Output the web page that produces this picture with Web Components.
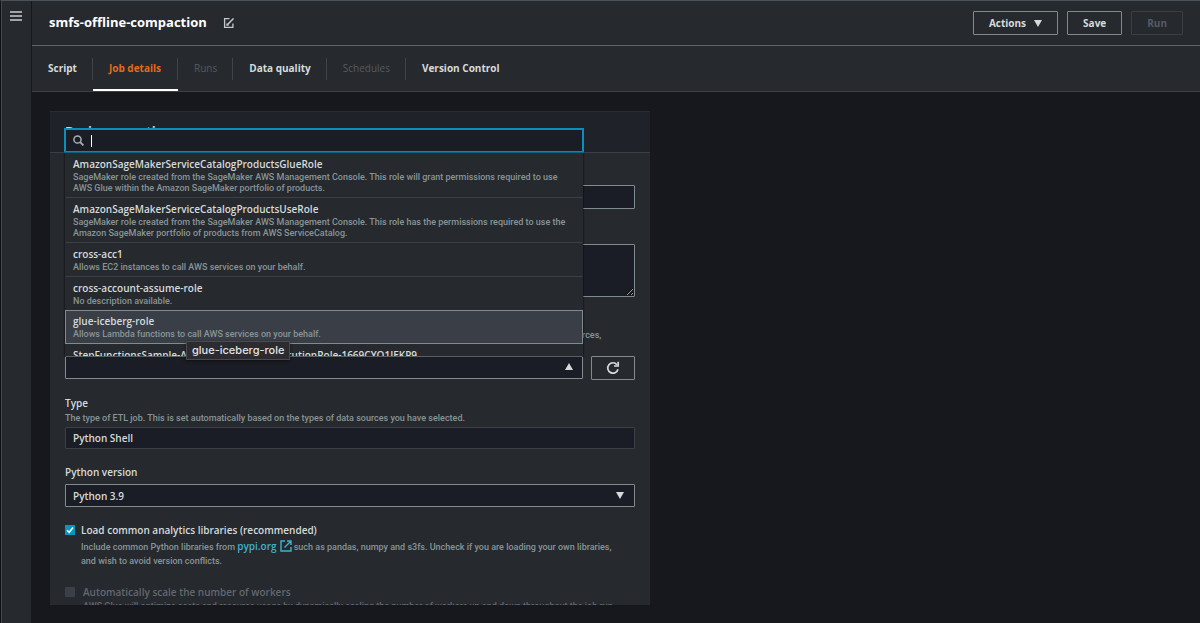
<!DOCTYPE html>
<html lang="en">
<head>
<meta charset="utf-8">
<title>smfs-offline-compaction</title>
<style>
  body {
    margin: 0;
    font-family: "Open Sans", "Noto Sans", sans-serif;
    font-size: 10px;
    color: #d5dbdb;
    background: #17181d;
    --hint-font: Roboto, "Noto Sans", sans-serif;
    --hint-color: #879596;
  }
</style>
</head>
<body>
<job-editor></job-editor>

<script>
class JobHeader extends HTMLElement {
  constructor() {
    super();
    this.attachShadow({ mode: 'open' });
  }

  connectedCallback() {
    this.shadowRoot.innerHTML = `
      <style>
        :host {
          display: flex;
          align-items: center;
          gap: 9px;
          height: 44px;
          padding: 0 17px;
          border-bottom: 1px solid #606469;
        }

        h1 {
          margin: 0;
          padding-bottom: 2px;
          font-size: 13px;
          line-height: 20px;
          font-weight: 700;
          color: #fff;
        }

        .title {
          display: flex;
          align-items: center;
          gap: 16px;
          flex: 1;
        }

        button {
          font: inherit;
          font-size: 10px;
          line-height: 16px;
          font-weight: 700;
          color: #d5dbdb;
          background: none;
          border: 1px solid #7f8c8d;
          border-radius: 1px;
          padding: 3px 15px;
          height: 24px;
        }

        button.icon {
          display: flex;
          padding: 0;
          border: 0;
          height: 12px;
        }

        button:disabled {
          color: #545b64;
          border-color: #3b3f44;
        }

        .actions svg {
          margin-left: 8px;
        }
      </style>
      <div class="title">
        <h1><slot></slot></h1>
        <button class="icon" aria-label="Edit name">
          <svg width="12" height="12" viewBox="0 0 12 12" fill="none" stroke="#c3c9ca" stroke-width="1.3">
            <path d="M6.5 1.6H1.6v8.8h8.300V6.500"/>
            <path d="M4.300 7.700L10.500 1.500" stroke-width="1.600"/>
            <path d="M4 6.500v1.700h1.700"/>
          </svg>
        </button>
      </div>
      <button class="actions">Actions<svg width="8" height="7" viewBox="0 0 8 7"><path d="M0 0h8L4 7z" fill="#d5dbdb"/></svg></button>
      <button>Save</button>
      <button disabled>Run</button>
    `;
  }
}

class JobTabs extends HTMLElement {
  constructor() {
    super();
    this.attachShadow({ mode: 'open' });
  }

  connectedCallback() {
    this.shadowRoot.innerHTML = `
      <style>
        :host {
          display: flex;
          height: 45px;
          border-bottom: 1px solid #3c3f45;
        }

        nav {
          display: flex;
          align-items: center;
        }

        ::slotted(a) {
          display: flex;
          align-items: center;
          box-sizing: border-box;
          height: 45px;
          padding: 0 16px;
          font-size: 10px;
          line-height: 16px;
          font-weight: 700;
          color: #d5dbdb;
          text-decoration: none;
          border-bottom: 2px solid transparent;
          background: linear-gradient(#3f444b, #3f444b) right 12px / 1px 22px no-repeat;
        }

        ::slotted(a:last-child) {
          background: none;
        }

        ::slotted(a.active) {
          padding-right: 17px;
          color: #e5691c;
          border-bottom-color: #fff;
        }

        ::slotted(a[aria-disabled]) {
          color: #545b5f;
          font-weight: 500;
        }
      </style>
      <nav><slot></slot></nav>
    `;
  }
}

class FormPanel extends HTMLElement {
  constructor() {
    super();
    this.attachShadow({ mode: 'open' });
  }

  connectedCallback() {
    this.shadowRoot.innerHTML = `
      <style>
        :host {
          display: block;
          box-sizing: border-box;
          background: #26292e;
          border-top: 1px solid #292c31;
          overflow: hidden;
        }

        header {
          padding: 9px 15px 11px;
          background: #1f2229;
          border-bottom: 1px solid #3c3f47;
        }

        h2 {
          margin: 0;
          font-size: 13px;
          line-height: 20px;
          font-weight: 700;
        }

        .fields {
          display: flex;
          flex-direction: column;
          gap: 15px;
          padding: 12px 15px;
        }
      </style>
      <header><h2><slot name="title"></slot></h2></header>
      <div class="fields"><slot></slot></div>
    `;
  }
}

class FormField extends HTMLElement {
  constructor() {
    super();
    this.attachShadow({ mode: 'open' });
  }

  connectedCallback() {
    this.shadowRoot.innerHTML = `
      <style>
        :host {
          display: block;
        }

        .label {
          display: flex;
          font-size: 10px;
          line-height: 16px;
          font-weight: 600;
          margin-bottom: 4px;
        }

        :host([hinted]) .label {
          margin-bottom: 1px;
        }

        .hint {
          padding-right: 12px;
          font-family: var(--hint-font);
          font-size: 9px;
          font-weight: 500;
          line-height: 12px;
          color: var(--hint-color);
          margin-bottom: 3px;
        }

        :host(:not([hinted])) .hint {
          display: none;
        }

        .control {
          display: flex;
          align-items: flex-start;
          gap: 8px;
        }
      </style>
      <div class="label"><slot name="label"></slot></div>
      <div class="hint"><slot name="hint"></slot></div>
      <div class="control"><slot></slot></div>
    `;
  }
}

class CheckField extends HTMLElement {
  constructor() {
    super();
    this.attachShadow({ mode: 'open' });
  }

  connectedCallback() {
    const checked = this.hasAttribute('checked') ? 'checked' : '';
    const disabled = this.hasAttribute('disabled') ? 'disabled' : '';
    this.shadowRoot.innerHTML = `
      <style>
        :host {
          display: grid;
          grid-template-columns: 10px 1fr;
          column-gap: 6px;
          align-items: center;
        }

        :host([disabled]) {
          column-gap: 8px;
          color: #62686e;
        }

        input {
          appearance: none;
          width: 10px;
          height: 10px;
          margin: 0;
          background: #3b3f47;
        }

        input:checked {
          background: #0a94c0 url("data:image/svg+xml,%3Csvg xmlns='http://www.w3.org/2000/svg' viewBox='0 0 10 10'%3E%3Cpath d='M2 5.200l2.200 2.200L8 2.500' fill='none' stroke='white' stroke-width='1.600'/%3E%3C/svg%3E");
        }

        label {
          font-size: 10px;
          line-height: 16px;
          font-weight: 600;
        }

        .hint {
          grid-column: 2;
          margin: 1px 0;
          padding-right: 12px;
          font-family: var(--hint-font);
          font-size: 9px;
          font-weight: 500;
          line-height: 14px;
          color: var(--hint-color);
        }

        :host([disabled]) .hint {
          margin: 0;
          padding-right: 0;
          line-height: 12px;
          color: #62686e;
        }
      </style>
      <input type="checkbox" id="box" ${checked} ${disabled}>
      <label for="box">${this.getAttribute('label')}</label>
      <div class="hint"><slot></slot></div>
    `;
  }
}

class RoleOption extends HTMLElement {
  constructor() {
    super();
    this.attachShadow({ mode: 'open' });
  }

  connectedCallback() {
    this.setAttribute('role', 'option');
    this.shadowRoot.innerHTML = `
      <style>
        :host {
          display: block;
          padding: 3px 10px 3px 7px;
          border: 1px solid transparent;
          border-width: 0 1px 1px;
          border-bottom-color: #3b3f47;
        }

        :host([selected]) {
          margin-top: -1px;
          padding-top: 2px;
          border: 1px solid #7f8c8d;
          background: #3a3e47;
        }

        .name {
          font-size: 10px;
          line-height: 16px;
          font-weight: 600;
          white-space: nowrap;
        }

        .description {
          font-family: var(--hint-font);
          font-size: 9px;
          font-weight: 500;
          line-height: 11px;
          color: var(--hint-color);
        }
      </style>
      <div class="name">${this.getAttribute('name')}</div>
      <div class="description"><slot></slot></div>
    `;
  }
}

class RolePicker extends HTMLElement {
  constructor() {
    super();
    this.attachShadow({ mode: 'open' });
  }

  connectedCallback() {
    this.shadowRoot.innerHTML = `
      <style>
        :host {
          display: block;
          position: relative;
          flex: 1;
        }

        /* opens upwards from the select */
        .menu {
          position: absolute;
          left: 0;
          right: 0;
          bottom: 100%;
          height: 228px;
          display: flex;
          flex-direction: column;
          z-index: 2;
        }

        .search {
          display: flex;
          align-items: center;
          box-sizing: border-box;
          height: 25px;
          margin: 0 -1px;
          padding-left: 7px;
          background: #1a1d25;
          border: 2px solid #0a8fba;
        }

        .caret {
          width: 1px;
          height: 12px;
          margin-left: 7px;
          background: #fff;
        }

        input {
          flex: 1;
          min-width: 0;
          padding: 0 4px;
          border: 0;
          outline: 0;
          font: inherit;
          color: inherit;
          background: none;
        }

        .list {
          flex: 1;
          min-height: 0;
          overflow: hidden;
          background: #26292e;
          box-shadow: 0 0 1px 1px rgba(0, 0, 0, 0.3);
        }

        .tooltip {
          position: absolute;
          left: 121px;
          bottom: -4px;
          padding: 0 5px;
          font: 500 11px/17px Inter, Roboto, sans-serif;
          color: #e4e4e6;
          background: #2c2b30;
          border: 1px solid #4b4a50;
          box-shadow: 0 1px 3px rgba(0, 0, 0, 0.5);
        }
      </style>
      <slot name="select"></slot>
      <div class="menu">
        <div class="search">
          <svg width="11" height="11" viewBox="0 0 11 11" fill="none" stroke="#a7b1b3" stroke-width="1.500">
            <circle cx="4.500" cy="4.500" r="3.600"/>
            <path d="M7.200 7.200L10.400 10.400" stroke-width="1.800"/>
          </svg>
          <span class="caret"></span>
          <input type="text" aria-label="Filter roles">
        </div>
        <div class="list" role="listbox"><slot></slot></div>
        <div class="tooltip" role="tooltip">glue-iceberg-role</div>
      </div>
    `;
  }
}

class JobEditor extends HTMLElement {
  constructor() {
    super();
    this.attachShadow({ mode: 'open' });
  }

  connectedCallback() {
    this.shadowRoot.innerHTML = `
      <style>
        :host {
          display: flex;
          box-sizing: border-box;
          height: 100vh;
          border-top: 1px solid #48525c;
          border-left: 1px solid #101114;
        }

        aside {
          box-sizing: border-box;
          width: 31px;
          padding: 10px 8px;
          background: #26292e;
          border-left: 1px solid #44484d;
          border-right: 1px solid #17181d;
        }

        aside button {
          display: flex;
          padding: 0;
          border: 0;
          background: none;
        }

        .page {
          flex: 1;
          min-width: 0;
          display: flex;
          flex-direction: column;
        }

        .top {
          background: #26292e;
        }

        main {
          flex: 1;
          min-height: 0;
          display: flex;
          padding: 19px 18px 18px;
        }

        form-panel {
          flex: 0 1 600px;
        }

        .input {
          flex: 1;
          min-width: 0;
          box-sizing: border-box;
          width: 100%;
          height: 24px;
          margin: 0;
          padding: 0 7px;
          font: inherit;
          font-size: 10px;
          font-weight: 600;
          color: #d5dbdb;
          background: #1a1d25;
          border: 1px solid #7f8c8d;
          border-radius: 1px;
        }

        .input[readonly] {
          height: 22px;
          border-color: #3b3f47;
        }

        textarea.input {
          height: 53px;
          resize: vertical;
        }

        select.input {
          display: block;
          height: 23px;
          appearance: none;
          background: #1a1d25 url("data:image/svg+xml,%3Csvg xmlns='http://www.w3.org/2000/svg' width='8' height='7'%3E%3Cpath d='M0 0h8L4 7z' fill='%23d5dbdb'/%3E%3C/svg%3E") right 10px center no-repeat;
        }

        select.open {
          background-image: url("data:image/svg+xml,%3Csvg xmlns='http://www.w3.org/2000/svg' width='8' height='7'%3E%3Cpath d='M0 7h8L4 0z' fill='%23d5dbdb'/%3E%3C/svg%3E");
          background-position: right 9px top 6px;
        }

        .refresh {
          display: flex;
          align-items: center;
          justify-content: center;
          box-sizing: border-box;
          width: 44px;
          height: 24px;
          padding: 0;
          background: none;
          border: 1px solid #7f8c8d;
          border-radius: 1px;
        }

        .link {
          font-family: "Open Sans", sans-serif;
          font-size: 10px;
          font-weight: 600;
          color: #3fb2d0;
          text-decoration: none;
        }

        .link svg {
          margin-left: 3px;
          vertical-align: -2px;
        }
      </style>
      <aside>
        <button aria-label="Open navigation">
          <svg width="12" height="10" viewBox="0 0 12 10" stroke="#c9cecf" stroke-width="1.500">
            <path d="M0 1h12M0 5h12M0 9h12"/>
          </svg>
        </button>
      </aside>
      <div class="page">
        <div class="top">
          <job-header>smfs-offline-compaction</job-header>
          <job-tabs>
            <a href="#script">Script</a>
            <a href="#details" class="active">Job details</a>
            <a href="#runs" aria-disabled="true">Runs</a>
            <a href="#quality">Data quality</a>
            <a href="#schedules" aria-disabled="true">Schedules</a>
            <a href="#version">Version Control</a>
          </job-tabs>
        </div>
        <main>
          <form-panel>
            <span slot="title">Basic properties</span>
            <form-field>
              <label slot="label" for="name">Name</label>
              <input class="input" id="name" type="text">
            </form-field>
            <form-field>
              <label slot="label" for="description">Description</label>
              <textarea class="input" id="description"></textarea>
            </form-field>
            <form-field hinted>
              <label slot="label" for="role">IAM Role</label>
              <span slot="hint">Role assumed by the job with permission to access your data stores. Ensure that this role has permission to your Amazon S3 sources, targets, temporary directory, scripts, and any libraries used by the job.</span>
              <role-picker>
                <select slot="select" class="input open" id="role"><option></option></select>
                <role-option name="AmazonSageMakerServiceCatalogProductsGlueRole">SageMaker role created from the SageMaker AWS Management Console. This role will grant permissions required to use AWS Glue within the Amazon SageMaker portfolio of products.</role-option>
                <role-option name="AmazonSageMakerServiceCatalogProductsUseRole">SageMaker role created from the SageMaker AWS Management Console. This role has the permissions required to use the Amazon SageMaker portfolio of products from AWS ServiceCatalog.</role-option>
                <role-option name="cross-acc1">Allows EC2 instances to call AWS services on your behalf.</role-option>
                <role-option name="cross-account-assume-role">No description available.</role-option>
                <role-option name="glue-iceberg-role" selected>Allows Lambda functions to call AWS services on your behalf.</role-option>
                <role-option name="StepFunctionsSample-AthenaQueryStateExecutionRole-1669CYO1IEKP9"></role-option>
              </role-picker>
              <button class="refresh" aria-label="Refresh roles">
                <svg width="14" height="14" viewBox="0 0 14 14" fill="none" stroke="#d5dbdb" stroke-width="1.700">
                  <path d="M12 8.200A5.200 5.200 0 1 1 11 3.700"/>
                  <path d="M12.200 0.800V5H8"/>
                </svg>
              </button>
            </form-field>
            <form-field hinted>
              <label slot="label" for="type">Type</label>
              <span slot="hint">The type of ETL job. This is set automatically based on the types of data sources you have selected.</span>
              <input class="input" id="type" type="text" value="Python Shell" readonly>
            </form-field>
            <form-field>
              <label slot="label" for="python">Python version</label>
              <select class="input" id="python"><option>Python 3.9</option></select>
            </form-field>
            <check-field label="Load common analytics libraries (recommended)" checked>Include common Python libraries from <a class="link" href="#pypi">pypi.org<svg width="12" height="12" viewBox="0 0 12 12" fill="none" stroke="#3fb2d0" stroke-width="1.400"><path d="M5 1H1v10h10V7M7 1h4v4M11 1L4.500 7.500"/></svg></a> such as pandas, numpy and s3fs. Uncheck if you are loading your own libraries, and wish to avoid version conflicts.</check-field>
            <check-field label="Automatically scale the number of workers" disabled>AWS Glue will optimize costs and resource usage by dynamically scaling the number of workers up and down throughout the job run.</check-field>
          </form-panel>
        </main>
      </div>
    `;
  }
}

customElements.define('job-header', JobHeader);
customElements.define('job-tabs', JobTabs);
customElements.define('form-panel', FormPanel);
customElements.define('form-field', FormField);
customElements.define('check-field', CheckField);
customElements.define('role-option', RoleOption);
customElements.define('role-picker', RolePicker);
customElements.define('job-editor', JobEditor);
</script>
</body>
</html>
